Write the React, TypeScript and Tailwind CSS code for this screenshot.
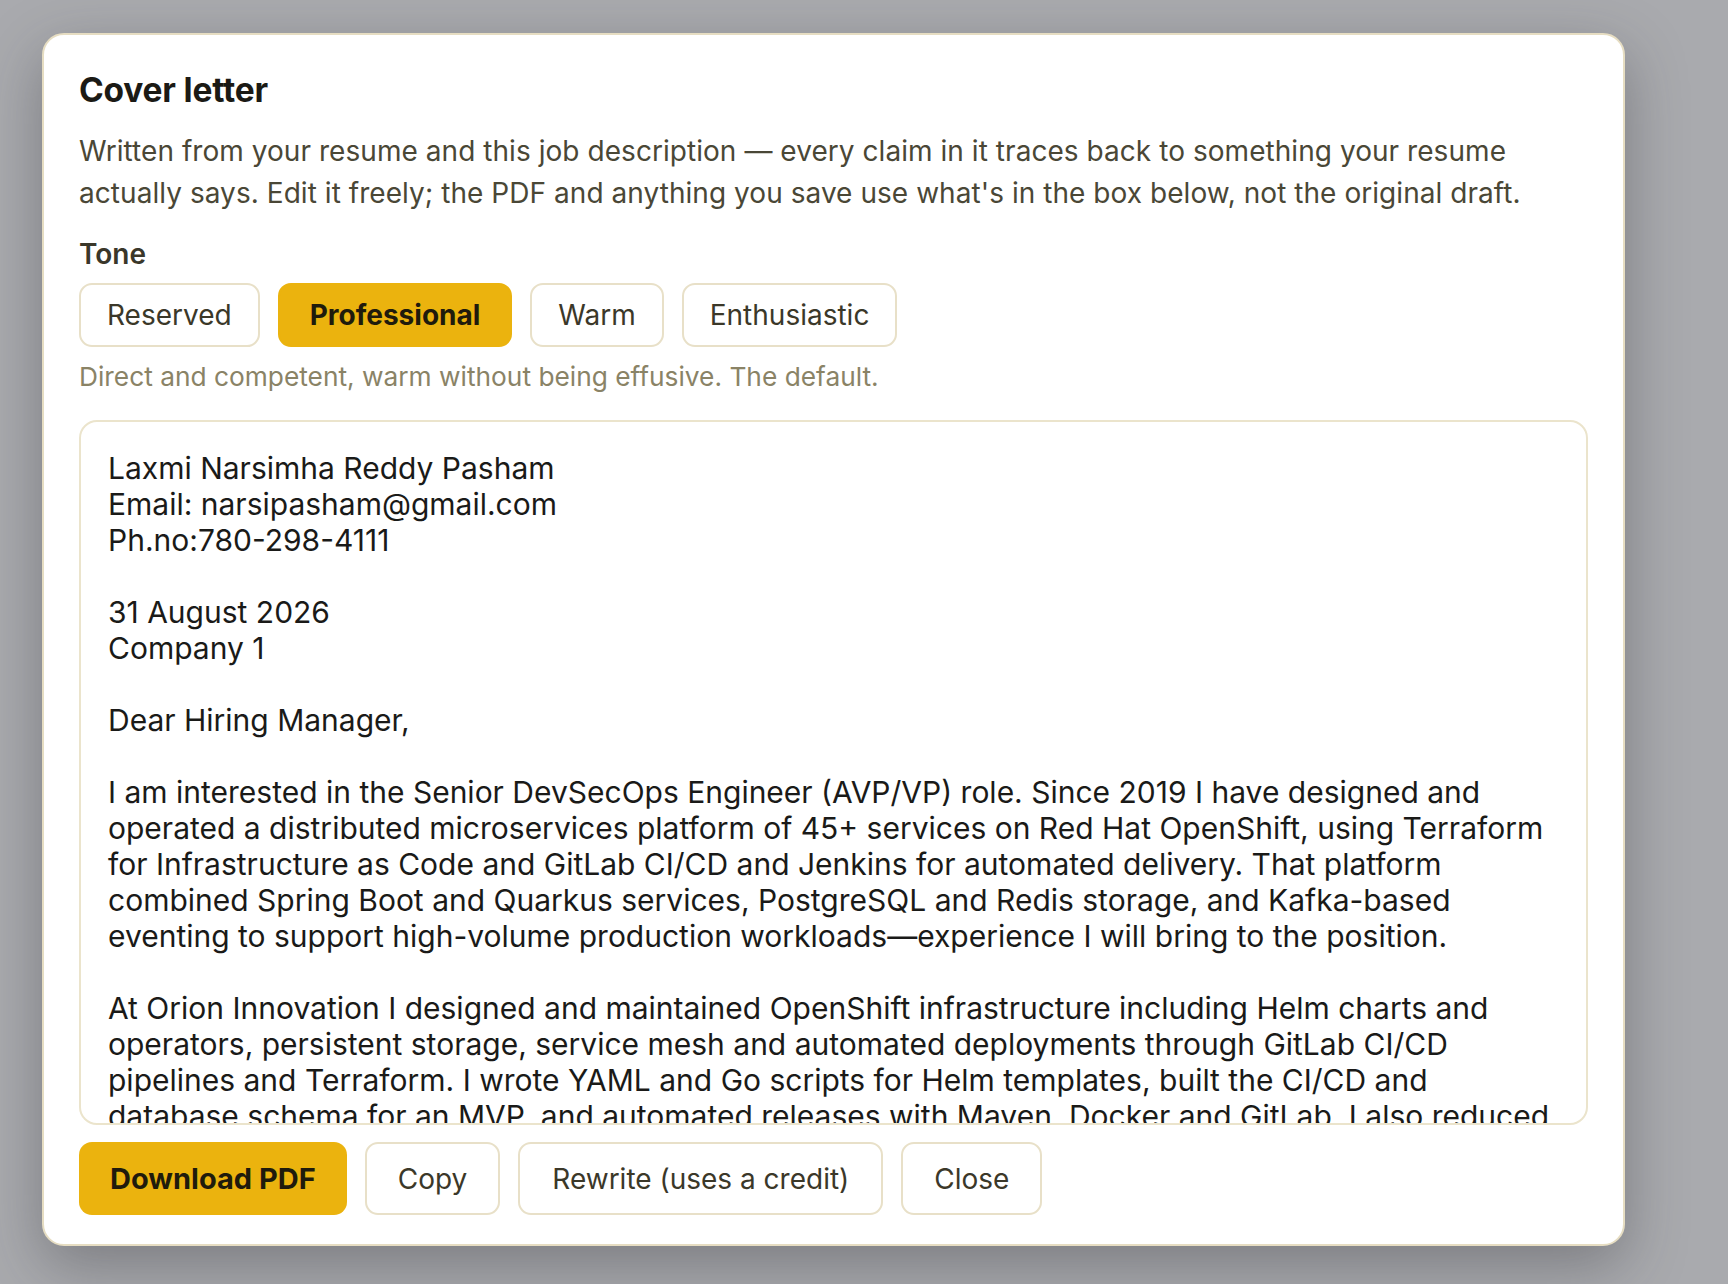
import { useState } from "react"

const tones = [
  { id: "reserved", label: "Reserved", hint: "Measured and understated. Lets the facts do the talking." },
  { id: "professional", label: "Professional", hint: "Direct and competent, warm without being effusive. The default." },
  { id: "warm", label: "Warm", hint: "Friendly and personable, still grounded in your experience." },
  { id: "enthusiastic", label: "Enthusiastic", hint: "Energetic and eager, without overselling." },
]

const letter = `Laxmi Narsimha Reddy Pasham
Email: narsipasham@gmail.com
Ph.no:780-298-4111

31 August 2026
Company 1

Dear Hiring Manager,

I am interested in the Senior DevSecOps Engineer (AVP/VP) role. Since 2019 I have designed and operated a distributed microservices platform of 45+ services on Red Hat OpenShift, using Terraform for Infrastructure as Code and GitLab CI/CD and Jenkins for automated delivery. That platform combined Spring Boot and Quarkus services, PostgreSQL and Redis storage, and Kafka-based eventing to support high-volume production workloads—experience I will bring to the position.

At Orion Innovation I designed and maintained OpenShift infrastructure including Helm charts and operators, persistent storage, service mesh and automated deployments through GitLab CI/CD pipelines and Terraform. I wrote YAML and Go scripts for Helm templates, built the CI/CD and database schema for an MVP, and automated releases with Maven, Docker and GitLab. I also reduced manual deployment effort across environments.

Thank you for your consideration.

Sincerely,
Laxmi Narsimha Reddy Pasham`

export default function App() {
  const [tone, setTone] = useState("professional")
  const [text, setText] = useState(letter)
  const current = tones.find((t) => t.id === tone)

  return (
    <div className="min-h-screen w-full bg-[#a9aaae] pl-[42px] pt-[33px] pb-10 font-['Inter','Noto_Sans',sans-serif]">
      <div className="w-[1583px] rounded-[22px] border-2 border-[#e6ddc2] bg-white px-[35px] pt-[36px] pb-[29px] shadow-[0_20px_60px_rgba(40,40,45,0.35)]">
        <h2 className="text-[33.5px] leading-[38px] font-bold tracking-[-0.2px] text-[#1b1a15]">Cover letter</h2>
        <p className="mt-[21px] text-[28px] leading-[42px] tracking-[0.05px] text-[#4a4736]">
          Written from your resume and this job description — every claim in it traces back to something your resume
          actually says. Edit it freely; the PDF and anything you save use what's in the box below, not the original draft.
        </p>

        <div className="mt-[23px] text-[28px] leading-[34px] font-semibold text-[#3a372a]">Tone</div>
        <div className="mt-[12px] flex gap-[18px]">
          {tones.map((t) =>
            t.id === tone ? (
              <button
                key={t.id}
                onClick={() => setTone(t.id)}
                className="h-[64px] rounded-[13px] border-2 border-[#ebb30e] bg-[#ebb30e] px-[30px] text-[28px] font-bold text-[#1f1b0c]"
              >
                {t.label}
              </button>
            ) : (
              <button
                key={t.id}
                onClick={() => setTone(t.id)}
                className="h-[64px] rounded-[13px] border-2 border-[#e8e0c8] bg-white px-[26px] text-[28px] text-[#3b3829]"
              >
                {t.label}
              </button>
            )
          )}
        </div>
        <p className="mt-[13px] text-[26.3px] leading-[34px] text-[#8a8366]">{current?.hint}</p>

        <textarea
          value={text}
          onChange={(e) => setText(e.target.value)}
          className="mt-[26px] block h-[705px] w-full resize-none overflow-hidden rounded-[18px] border-2 border-[#ebe4cc] bg-white px-[27px] pt-[28px] text-[30px] leading-[36px] text-[#1a1a18] outline-none [scrollbar-width:none]"
        />

        <div className="mt-[17px] flex gap-[18px]">
          <button className="h-[73px] rounded-[13px] bg-[#ebb30e] px-[31px] text-[29px] font-bold text-[#1f1b0c]">
            Download PDF
          </button>
          <button className="h-[73px] rounded-[13px] border-2 border-[#e8e0c8] bg-white px-[31px] text-[28px] text-[#3b3829]">
            Copy
          </button>
          <button className="h-[73px] rounded-[13px] border-2 border-[#e8e0c8] bg-white px-[32px] text-[28px] text-[#3b3829]">
            Rewrite (uses a credit)
          </button>
          <button className="h-[73px] rounded-[13px] border-2 border-[#e8e0c8] bg-white px-[31px] text-[28px] text-[#3b3829]">
            Close
          </button>
        </div>
      </div>
    </div>
  )
}
